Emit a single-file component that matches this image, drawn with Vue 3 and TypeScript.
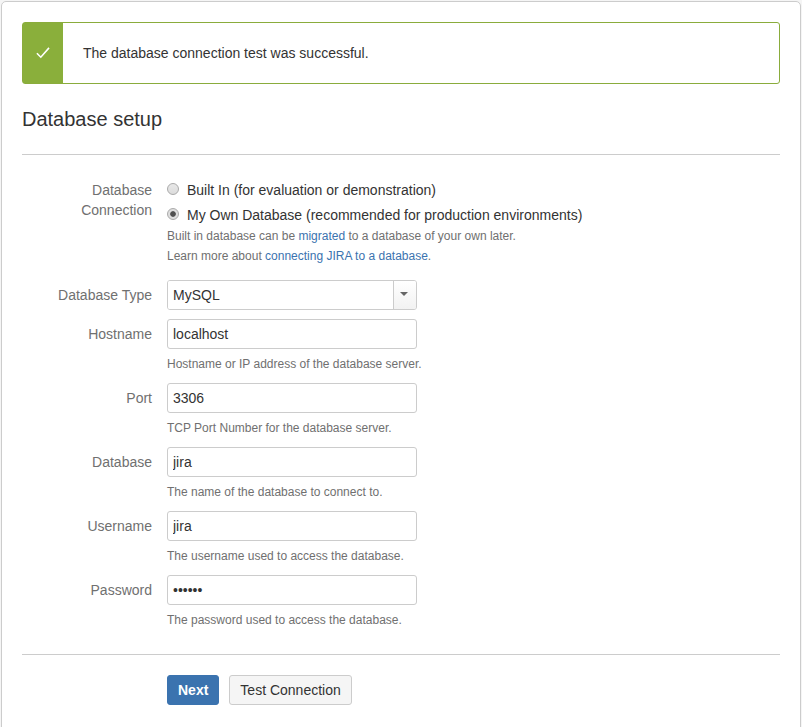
<script setup lang="ts">
import { reactive, ref } from 'vue'

interface TextField {
  id: string
  label: string
  type: 'text' | 'password'
  hint: string
}

const fields: TextField[] = [
  { id: 'hostname', label: 'Hostname', type: 'text', hint: 'Hostname or IP address of the database server.' },
  { id: 'port', label: 'Port', type: 'text', hint: 'TCP Port Number for the database server.' },
  { id: 'database', label: 'Database', type: 'text', hint: 'The name of the database to connect to.' },
  { id: 'username', label: 'Username', type: 'text', hint: 'The username used to access the database.' },
  { id: 'password', label: 'Password', type: 'password', hint: 'The password used to access the database.' },
]

const values = reactive<Record<string, string>>({
  hostname: 'localhost',
  port: '3306',
  database: 'jira',
  username: 'jira',
  password: 'secret',
})

const connection = ref('external')
const options = [
  { value: 'internal', label: 'Built In (for evaluation or demonstration)' },
  { value: 'external', label: 'My Own Database (recommended for production environments)' },
]
</script>

<template>
  <main class="panel">
    <div class="message">
      <div class="message-icon">
        <svg width="14" height="12" viewBox="0 0 14 12" fill="none">
          <path d="M0.9 6.3 L4.8 10.2 L13 0.9" stroke="#fff" stroke-width="1.6" />
        </svg>
      </div>
      <p class="message-text">The database connection test was successful.</p>
    </div>

    <h1 class="title">Database setup</h1>

    <form class="form" @submit.prevent>
      <div class="row connection">
        <span class="label">Database Connection</span>
        <div class="control">
          <label v-for="o in options" :key="o.value" class="option">
            <input v-model="connection" class="radio" type="radio" name="connection" :value="o.value" />
            <span>{{ o.label }}</span>
          </label>
          <p class="hint">Built in database can be <a href="#">migrated</a> to a database of your own later.</p>
          <p class="hint">Learn more about <a href="#">connecting JIRA to a database</a>.</p>
        </div>
      </div>

      <div class="row type">
        <label class="label field-label" for="type">Database Type</label>
        <div class="select">
          <input id="type" class="select-value" type="text" value="MySQL" readonly />
          <span class="select-arrow">
            <svg width="8" height="4" viewBox="0 0 8 4"><path d="M0 0H8L4 4Z" fill="#666" /></svg>
          </span>
        </div>
      </div>

      <div v-for="f in fields" :key="f.id" class="row field">
        <label class="label field-label" :for="f.id">{{ f.label }}</label>
        <div class="control">
          <input :id="f.id" v-model="values[f.id]" class="input" :type="f.type" />
          <p class="hint field-hint">{{ f.hint }}</p>
        </div>
      </div>

      <div class="buttons">
        <button class="button primary" type="submit">Next</button>
        <button class="button" type="button">Test Connection</button>
      </div>
    </form>
  </main>
</template>

<style>
body {
  background: #f5f5f5;
  overflow: hidden;
}
</style>

<style scoped>
.panel,
.panel * {
  box-sizing: border-box;
}
.panel {
  width: 800px;
  height: 740px;
  margin: 1px 0 0 1px;
  padding: 20px;
  background: #fff;
  border: 1px solid #ccc;
  border-radius: 5px;
  font: 14px/20px "Liberation Sans", Arial, sans-serif;
  color: #333;
}
.message {
  display: flex;
  height: 62px;
  border: 1px solid #8aac3c;
  border-radius: 3px;
}
.message-icon {
  display: flex;
  align-items: center;
  justify-content: center;
  width: 40px;
  background: #8aaf3b;
}
.message-text {
  margin: 20px;
}
.title {
  margin: 20px 0 0;
  font-size: 20px;
  font-weight: 400;
  line-height: 30px;
}
.form {
  margin-top: 20px;
  border-top: 1px solid #ccc;
  padding-top: 25px;
}
.row {
  display: flex;
  gap: 15px;
}
.label {
  width: 130px;
  padding-left: 30px;
  text-align: right;
  color: #707070;
}
.field-label {
  padding: 5px 0;
}
.connection {
  height: 100px;
}
.option {
  display: flex;
  align-items: flex-start;
  gap: 8px;
  height: 25px;
}
.option + .hint {
  margin-top: -4px;
}
.radio {
  appearance: none;
  width: 12px;
  height: 12px;
  margin: 3px 0 0;
  border: 1px solid #aaa;
  border-radius: 50%;
  background: linear-gradient(#e8e8e8, #dcdcdc);
}
.radio:checked {
  background: radial-gradient(circle, #505050 0 2.4px, #dedede 3.2px);
}
.hint {
  margin: 0;
  font-size: 12px;
  color: #707070;
}
.hint a {
  color: #3b73af;
  text-decoration: none;
}
.type {
  height: 39px;
}
.select {
  display: flex;
  width: 250px;
  height: 30px;
  border: 1px solid #ccc;
  border-radius: 3px;
  overflow: hidden;
}
.select-value {
  flex: 1;
  min-width: 0;
  padding: 0 5px;
  border: 0;
  background: #fff;
  font: inherit;
  color: inherit;
  outline: none;
}
.select-arrow {
  display: flex;
  justify-content: center;
  width: 23px;
  padding: 11px 2px 0 0;
  border-left: 1px solid #ccc;
  background: linear-gradient(#fff, #f2f2f2);
}
.field {
  height: 64px;
}
.input {
  display: block;
  width: 250px;
  height: 30px;
  padding: 4px 5px;
  border: 1px solid #ccc;
  border-radius: 3px;
  background: #fff;
  font: inherit;
  color: inherit;
}
.field-hint {
  margin-top: 5px;
}
.buttons {
  display: flex;
  gap: 10px;
  margin-top: 15px;
  padding: 20px 0 0 145px;
  border-top: 1px solid #ccc;
}
.button {
  height: 30px;
  padding: 0 10px;
  border: 1px solid #ccc;
  border-radius: 3px;
  background: #f5f5f5;
  font: inherit;
  color: #333;
}
.primary {
  border-color: #3b73af;
  background: #3b73af;
  color: #fff;
  font-weight: 700;
}
</style>
